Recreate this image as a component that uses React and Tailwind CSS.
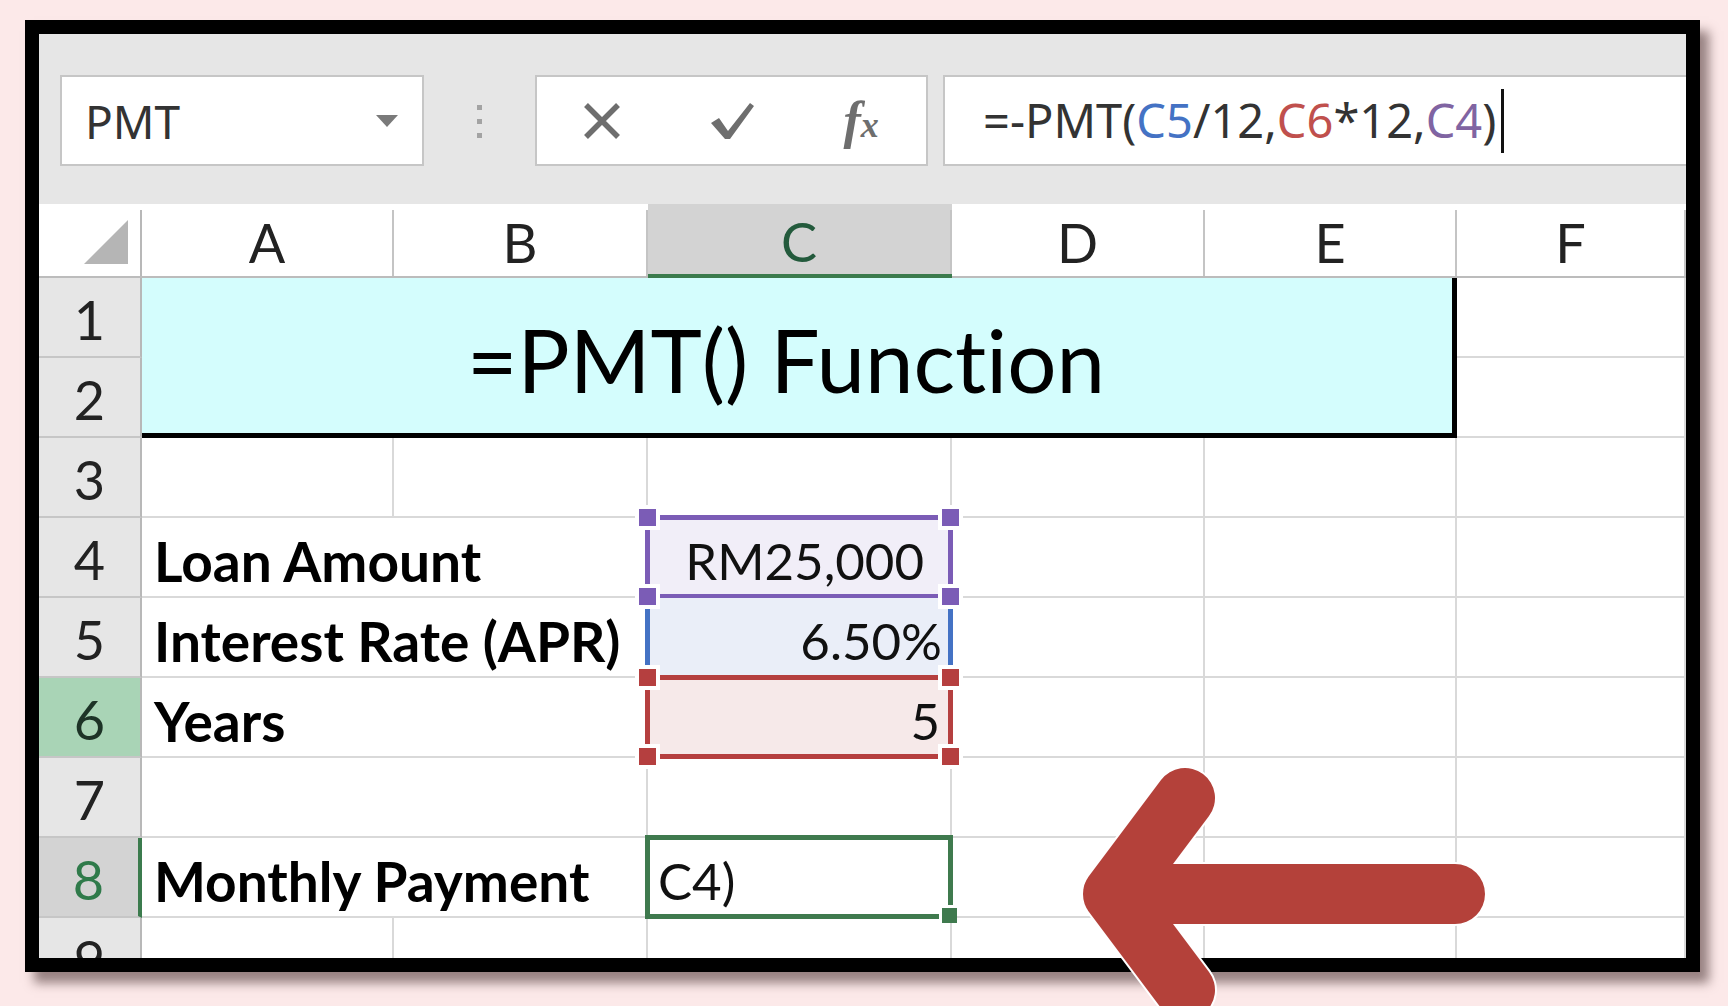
const cellFont = "font-['Lato','Liberation_Sans',sans-serif] [font-variant-ligatures:none]";
const uiFont = "font-['Noto_Sans','Open_Sans',sans-serif]";
const gridLine = "border-r-2 border-b-2 border-[#d9d9d9]";

const ColHead = ({ label, selected }) => (
  <div
    className={`flex h-full ${
      selected ? "bg-[#d3d3d3] border-b-4 border-[#3b7b4d]" : "border-b-2 border-[#bcbcbc]"
    }`}
  >
    <div
      className={`flex flex-1 items-center justify-center pt-[5px] text-[54px] leading-none ${
        selected ? "text-[#235a3c]" : "text-[#222]"
      }`}
    >
      {label}
    </div>
    <div className="mt-[6px] w-[2px] self-stretch bg-[#c4c4c4]" />
  </div>
);

const RowHead = ({ n, tone }) => {
  const look =
    tone === "range"
      ? "bg-[#a9d4b6] text-[#1d3327] border-r-2 border-[#b8b8b8]"
      : tone === "active"
        ? "bg-[#d3d3d3] text-[#2f7a4a] border-r-4 border-[#3b7b4d]"
        : "bg-[#e6e6e6] text-[#222] border-r-2 border-[#b8b8b8]";

  return (
    <div
      className={`flex items-center justify-center border-b-2 border-b-[#c6c6c6] pt-[6px] text-[54px] leading-none ${look}`}
    >
      {n}
    </div>
  );
};

const Cell = ({ className = "", children }) => (
  <div className={`${gridLine} ${className}`}>{children}</div>
);

const Handle = ({ pos, color }) => (
  <span
    className={`absolute z-10 h-[25px] w-[25px] border-4 border-white ${color} ${pos}`}
  />
);

const RangeBox = ({ line, fill }) => (
  <>
    <span className={`absolute -inset-[3px] border-[5px] ${line}`} />
    <Handle pos="-left-[13px] -top-[13px]" color={fill} />
    <Handle pos="-right-[13px] -top-[13px]" color={fill} />
    <Handle pos="-left-[13px] -bottom-[13px]" color={fill} />
    <Handle pos="-right-[13px] -bottom-[13px]" color={fill} />
  </>
);

const Label = ({ children }) => (
  <div
    className={`col-span-2 flex items-center whitespace-nowrap pl-[12px] pt-[8px] text-[55px] font-bold leading-none text-black ${gridLine}`}
  >
    {children}
  </div>
);

const Toolbar = () => (
  <div className={`flex items-start pl-[21px] pt-[41px] ${uiFont}`}>
    <div className="flex h-[91px] w-[364px] items-center border-2 border-[#c6c6c6] bg-white pl-[23px] text-[46px] leading-none text-[#333]">
      PMT
      <svg viewBox="0 0 22 12" className="ml-auto mr-[24px] h-[12px] w-[22px]">
        <path d="M0 0h22L11 12z" fill="#7a7a7a" />
      </svg>
    </div>

    <div className="ml-[53px] mt-[30px] flex flex-col gap-[9px]">
      <span className="h-[5px] w-[5px] bg-[#a3a3a3]" />
      <span className="h-[5px] w-[5px] bg-[#a3a3a3]" />
      <span className="h-[5px] w-[5px] bg-[#a3a3a3]" />
    </div>

    <div className="ml-[53px] flex h-[91px] w-[393px] items-center border-2 border-[#c6c6c6] bg-white">
      <div className="flex w-[130px] justify-center">
        <svg viewBox="0 0 40 36" className="h-[36px] w-[40px]">
          <path d="M4 2L36 34M36 2L4 34" stroke="#6e6e6e" strokeWidth="5.5" />
        </svg>
      </div>
      <div className="flex w-[130px] justify-center">
        <svg viewBox="0 0 48 40" className="h-[40px] w-[48px]">
          <path d="M3 22l8-5 9 13L42 2l4 3-24 33h-5z" fill="#6e6e6e" />
        </svg>
      </div>
      <div className="flex w-[130px] justify-center font-['Liberation_Serif',serif] font-bold italic leading-none text-[#6e6e6e]">
        <span className="text-[52px]">f</span>
        <span className="mt-[12px] text-[36px]">x</span>
      </div>
    </div>

    <div className="ml-[15px] flex h-[91px] flex-1 items-center border-2 border-r-0 border-[#c6c6c6] bg-white pl-[38px] text-[47px] leading-none text-[#333]">
      <span>=-PMT(</span>
      <span className="text-[#4472c4]">C5</span>
      <span>/12,</span>
      <span className="text-[#c0504d]">C6</span>
      <span>*12,</span>
      <span className="text-[#8064a2]">C4</span>
      <span>)</span>
      <span className="ml-[5px] h-[64px] w-[3px] bg-[#111]" />
    </div>
  </div>
);

const Sheet = () => (
  <div
    className={`mt-[38px] grid grid-cols-[103px_252px_254px_304px_253px_252px_1fr] grid-rows-[74px_repeat(9,80px)] ${cellFont}`}
  >
    <div className="flex border-b-2 border-[#bcbcbc]">
      <div className="flex flex-1 items-end justify-end pb-[12px] pr-[12px]">
        <svg viewBox="0 0 44 44" className="h-[44px] w-[44px]">
          <path d="M44 0V44H0z" fill="#b5b5b5" />
        </svg>
      </div>
      <div className="mt-[6px] w-[2px] self-stretch bg-[#b8b8b8]" />
    </div>
    <ColHead label="A" />
    <ColHead label="B" />
    <ColHead label="C" selected />
    <ColHead label="D" />
    <ColHead label="E" />
    <ColHead label="F" />

    <RowHead n="1" />
    <div className="col-span-5 row-span-2 flex items-center justify-center border-r-[5px] border-b-[5px] border-black bg-[#d4fdfd] pr-[22px] pt-[8px] text-[87px] leading-none text-black">
      =PMT() Function
    </div>
    <Cell />
    <RowHead n="2" />
    <Cell />

    <RowHead n="3" />
    <Cell />
    <Cell />
    <Cell />
    <Cell />
    <Cell />
    <Cell />

    <RowHead n="4" />
    <Label>Loan Amount</Label>
    <div className={`relative flex items-center justify-end bg-[#f1eef8] pr-[26px] pt-[6px] text-[51px] leading-none text-[#111] ${gridLine}`}>
      RM25,000
      <RangeBox line="border-[#7b5cb6]" fill="bg-[#7b5cb6]" />
    </div>
    <Cell />
    <Cell />
    <Cell />

    <RowHead n="5" />
    <Label>Interest Rate (APR)</Label>
    <div className={`relative flex items-center justify-end bg-[#eaeef8] pr-[8px] pt-[6px] text-[51px] leading-none text-[#111] ${gridLine}`}>
      6.50%
      <span className="absolute -left-[3px] top-0 bottom-0 w-[5px] bg-[#4472c4]" />
      <span className="absolute -right-[3px] top-0 bottom-0 w-[5px] bg-[#4472c4]" />
    </div>
    <Cell />
    <Cell />
    <Cell />

    <RowHead n="6" tone="range" />
    <Label>Years</Label>
    <div className={`relative flex items-center justify-end bg-[#f6e9e9] pr-[10px] pt-[6px] text-[51px] leading-none text-[#111] ${gridLine}`}>
      5
      <RangeBox line="border-[#b53f3f]" fill="bg-[#b53f3f]" />
    </div>
    <Cell />
    <Cell />
    <Cell />

    <RowHead n="7" />
    <Label />
    <Cell />
    <Cell />
    <Cell />
    <Cell />

    <RowHead n="8" tone="active" />
    <Label>Monthly Payment</Label>
    <div className={`relative flex items-center pl-[10px] pt-[6px] text-[51px] leading-none text-[#111] ${gridLine}`}>
      C4)
      <span className="absolute -inset-[3px] border-[5px] border-[#3f7a4e]" />
      <span className="absolute -bottom-[7px] -right-[7px] z-10 h-[18px] w-[18px] border-l-[3px] border-t-[3px] border-white bg-[#3f7a4e]" />
    </div>
    <Cell />
    <Cell />
    <Cell />

    <RowHead n="9" />
    <Cell />
    <Cell />
    <Cell />
    <Cell />
    <Cell />
    <Cell />
  </div>
);

const Arrow = () => (
  <svg
    className="pointer-events-none absolute left-0 top-0 h-[1006px] w-[1728px]"
    viewBox="0 0 1728 1006"
  >
    <path
      d="M1185 798L1113 894L1185 990M1113 894H1455"
      fill="none"
      stroke="#ffffff"
      strokeWidth="64"
      strokeLinecap="round"
      strokeLinejoin="round"
    />
    <path
      d="M1185 798L1113 894L1185 990M1113 894H1455"
      fill="none"
      stroke="#b4413a"
      strokeWidth="60"
      strokeLinecap="round"
      strokeLinejoin="round"
    />
  </svg>
);

export default function App() {
  return (
    <div className="relative h-[1006px] w-[1728px] overflow-hidden bg-[#fce9e9]">
      <div className="ml-[25px] mt-[20px] h-[952px] w-[1675px] overflow-hidden border-[14px] border-black bg-[#e6e6e6] shadow-[9px_11px_10px_rgba(70,45,45,0.55)]">
        <Toolbar />
        <div className="bg-white">
          <Sheet />
        </div>
      </div>
      <Arrow />
    </div>
  );
}
